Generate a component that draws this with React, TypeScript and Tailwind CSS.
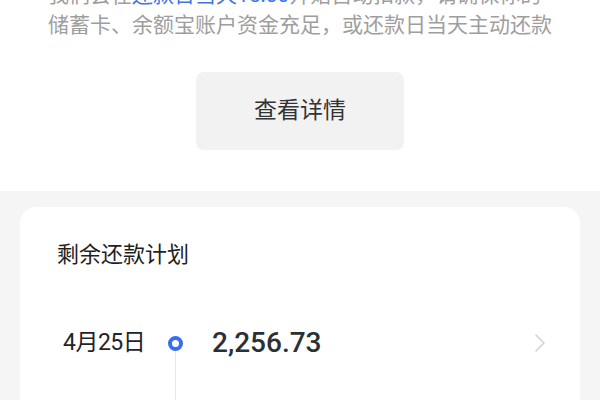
export default function App() {
  return (
    <div className="flex h-[400px] w-[600px] flex-col overflow-hidden bg-[#f5f5f5] font-['Roboto','Noto_Sans_CJK_SC',sans-serif]">
      <section className="flex flex-col items-center bg-white pb-[41px]">
        <div className="-mt-[20px] w-[504px] text-[21px] leading-[30px] text-[#9e9e9e]">
          <p className="whitespace-nowrap">
            我们会在<span className="text-[#3f74e8]">还款日当天15:00</span>
            开始自动扣款，请确保你的
          </p>
          <p className="whitespace-nowrap">储蓄卡、余额宝账户资金充足，或还款日当天主动还款</p>
        </div>

        <button
          type="button"
          className="mt-[32px] flex h-[78px] w-[208px] items-center justify-center rounded-lg bg-[#f2f2f2] text-[23px] text-[#333]"
        >
          查看详情
        </button>
      </section>

      <section className="mx-5 mt-4 flex-1 rounded-t-2xl bg-white px-[37px] pt-8">
        <h2 className="text-[22px] leading-[32px] text-[#1f1f1f]">剩余还款计划</h2>

        <div className="mt-14 flex items-start">
          <div className="w-[98px] pl-[6px] text-[23px] leading-[32px] tracking-[-0.5px] text-[#1f232a]">
            4月25日
          </div>

          <div className="flex w-[40px] flex-col items-center self-stretch">
            <div className="mt-[9px] h-[15px] w-[15px] rounded-full border-[4px] border-[#3a6cf0]" />
            <div className="h-[60px] w-px bg-[#e6e6e6]" />
          </div>

          <div className="ml-[17px] flex-1 text-[28px] font-medium leading-[32px] text-[#2b2f36]">
            2,256.73
          </div>

          <svg
            viewBox="0 0 24 24"
            className="mr-[-8px] mt-[4px] h-6 w-6"
            fill="none"
            stroke="#d2d2d2"
            strokeWidth="1.6"
            aria-hidden="true"
          >
            <path strokeLinecap="round" strokeLinejoin="round" d="m9 4 8 8-8 8" />
          </svg>
        </div>
      </section>
    </div>
  )
}
